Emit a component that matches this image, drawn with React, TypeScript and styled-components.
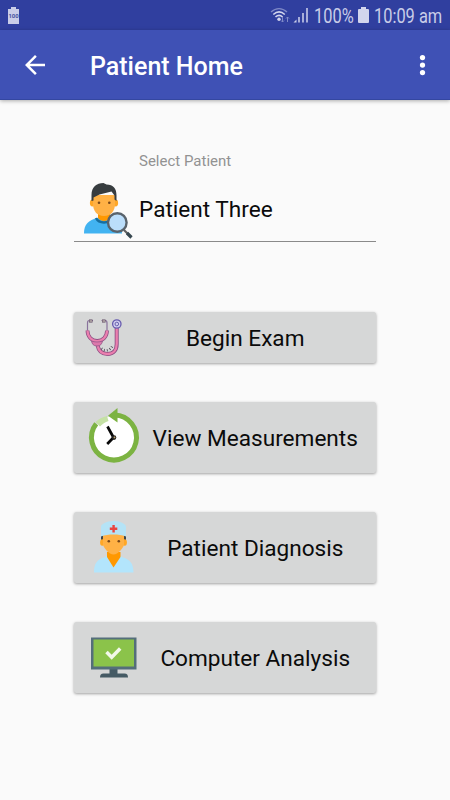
import React from "react";
import styled, { createGlobalStyle } from "styled-components";

const GlobalStyle = createGlobalStyle`
  body { margin: 0; background: #fafafa; }
  * { box-sizing: border-box; }
`;

const Screen = styled.div`
  width: 450px;
  height: 800px;
  overflow: hidden;
  display: flex;
  flex-direction: column;
  background: #fafafa;
  color: #0b0b0b;
  font-family: Roboto, "Liberation Sans", sans-serif;
`;

const StatusBar = styled.div`
  flex: none;
  height: 30px;
  display: flex;
  align-items: center;
  padding: 0 0 0 7px;
  background: #303f9f;
  color: #c9cde8;
`;

const StatusIcons = styled.svg<{ $left?: string; $right?: number }>`
  display: block;
  flex: none;
  margin-left: ${(p) => p.$left ?? "0"};
  margin-right: ${(p) => p.$right ?? 0}px;
`;

const StatusText = styled.div<{ $width: number; $scale: number }>`
  flex: none;
  width: ${(p) => p.$width}px;
  font-size: 20px;
  line-height: 30px;
  white-space: nowrap;
  transform: translateY(0.5px) scaleX(${(p) => p.$scale});
  transform-origin: left center;
`;

const AppBar = styled.header`
  flex: none;
  height: 70px;
  display: flex;
  align-items: center;
  padding: 0 15px 0 20px;
  background: #3f51b5;
  border-bottom: 1px solid #3447a1;
  box-shadow: 0 1px 4px rgba(0, 0, 0, 0.32);
  color: #fff;
`;

const IconButton = styled.button`
  width: 30px;
  height: 30px;
  padding: 0;
  border: 0;
  background: none;
  svg { display: block; }
`;

const Title = styled.h1`
  flex: 1;
  margin: 5px 0 0 40px;
  font-size: 25px;
  line-height: 30px;
  font-weight: 500;
  white-space: nowrap;
`;

const Content = styled.main`
  width: 302.5px;
  margin: 0 0 0 73.5px;
  display: flex;
  flex-direction: column;
`;

const PatientField = styled.div`
  margin-top: 51px;
  height: 91px;
  display: grid;
  grid-template-columns: 65.5px 1fr;
  grid-template-rows: 20px 1fr;
  border-bottom: 1.5px solid #8a8a8a;
`;

const FieldLabel = styled.label`
  grid-column: 2;
  font-size: 15px;
  line-height: 20px;
  color: #929292;
`;

const FieldValue = styled.div`
  grid-column: 2;
  padding-top: 24px;
  font-size: 22.6px;
  line-height: 30px;
`;

const FieldIcon = styled.div`
  grid-column: 1;
  padding: 10px 0 0 8.5px;
  svg { display: block; }
`;

const Actions = styled.nav`
  margin-top: 70px;
  display: flex;
  flex-direction: column;
  gap: 39px;
`;

const ActionButton = styled.button<{ $height: number }>`
  height: ${(p) => p.$height}px;
  display: flex;
  align-items: center;
  padding: 0 7.5px 0 8.5px;
  border: 0;
  border-radius: 2.5px;
  background: #d6d7d7;
  box-shadow: 0 1px 3px rgba(0, 0, 0, 0.36);
  color: inherit;
  font: inherit;
  svg { display: block; flex: none; }
`;

const ActionLabel = styled.span`
  flex: 1;
  padding-top: 2px;
  text-align: center;
  font-size: 22.6px;
  line-height: 30px;
  white-space: nowrap;
`;

const PatientIcon = () => (
  <svg width="53" height="58" viewBox="82 181 53 58">
    <path d="M84 233.500c0-9 4-13.500 14-15.500h11c9 2 13 7 13 15.500z" fill="#42b3f1" />
    <path d="M96 218c3 6 13 6 16 0" fill="none" stroke="#176e9f" strokeWidth="2.500" />
    <path d="M98 208h12v10c-3 4-9 4-12 0z" fill="#ff9800" />
    <ellipse cx="92.300" cy="203" rx="2.400" ry="3.400" fill="#ffa726" />
    <ellipse cx="115.700" cy="203" rx="2.400" ry="3.400" fill="#ffa726" />
    <path d="M93 195h22v9c0 7-4 12-11 12s-11-5-11-12z" fill="#ffb145" />
    <path d="M91.500 201v-6c0-8 5-12 12-12l3 1.500c7 0 10 4 10 11v5.500l-2-1.500v-4l-3-4-12 3-6 3v3z" fill="#373c3f" />
    <circle cx="99" cy="202.700" r="1.300" fill="#784719" />
    <circle cx="109.300" cy="202.700" r="1.300" fill="#784719" />
    <path d="m124 230 7 7" stroke="#616161" strokeWidth="2.200" />
    <path d="m127 233 4.500 4.500" stroke="#37474f" strokeWidth="3.200" />
    <circle cx="117.300" cy="222.500" r="9.300" fill="#bbdefb" stroke="#59636c" strokeWidth="2.400" />
  </svg>
);

const StethoscopeIcon = () => (
  <svg width="40" height="44" viewBox="82 316 40 44" fill="none">
    <path d="M93 320.500h-3.800c-1.700 0-1.700 1-1.700 2.500v8M101.500 320.500h3.800c1.700 0 1.700 1 1.700 2.500v8" stroke="#89729c" strokeWidth="1.200" />
    <path d="M89 321h3.500M102 321h3.500" stroke="#5d4961" strokeWidth="3" />
    <path d="M89.500 321h2.500M102.500 321h2.500" stroke="#ece5d5" strokeWidth="1.200" />
    <path d="M87.500 330.500c0 6 4 10.500 9.700 10.500s9.800-4.500 9.800-10.500" stroke="#8d4e83" strokeWidth="3.800" />
    <path d="M87.500 330.500c0 6 4 10.500 9.700 10.500s9.800-4.500 9.800-10.500" stroke="#eb7fae" strokeWidth="2.200" />
    <path d="M97.500 345c1 6 5 9 10 9 6 0 9.200-4 9.200-10v-16" stroke="#8d4e83" strokeWidth="4" />
    <path d="M97.500 345c1 6 5 9 10 9 6 0 9.200-4 9.200-10v-16" stroke="#eb7fae" strokeWidth="2.300" />
    <path d="M91.500 341c3 1.300 8 1.300 11 0-.5 3-2 5-5.500 5s-5-2-5.500-5z" fill="#dd78ab" stroke="#945a8c" strokeWidth=".8" />
    <path d="M101.500 348.500c3 3 9 2.500 11-3" stroke="#4d4856" strokeWidth="2.500" strokeDasharray=".8 2.100" />
    <circle cx="116.800" cy="324" r="4.200" fill="#d1cef0" stroke="#675bae" strokeWidth="1.300" />
    <circle cx="116.800" cy="324" r="1.800" stroke="#6962ae" strokeWidth="1" />
  </svg>
);

const ClockIcon = () => (
  <svg width="60" height="60" viewBox="82 408 60 60">
    <circle cx="113.800" cy="437.500" r="21.500" fill="#fff" />
    <path d="m95.500 422 4.500 4.500c2.500-2.700 5-4.300 8.500-5.500l-1.500-5c-4.500 1-8.500 3-11.500 6z" fill="#c5e1a5" />
    <path d="M114.500 415a22.500 22.500 0 1 1-18.300 8.700" fill="none" stroke="#7cb342" strokeWidth="5" />
    <path d="m117.500 408-9.500 7.700 9.500 6.800z" fill="#7cb342" />
    <path d="m107.500 426.500 6 11-6.300 6.500" fill="none" stroke="#080808" strokeWidth="2.700" strokeLinejoin="round" />
    <circle cx="114" cy="437.600" r="2.300" fill="#222" />
    <circle cx="114.500" cy="437.400" r=".9" fill="#c0a36b" />
  </svg>
);

const DoctorIcon = () => (
  <svg width="60" height="60" viewBox="82 518 60 60">
    <path d="M94 572.500c0-9 3-13 10-15l5-3h9l5 3c7 2 10.500 6 10.500 15z" fill="#b3e5fc" />
    <path d="M107 552h13.500v5l-7 10.500-6.500-10.500z" fill="#ff9800" />
    <path d="M101 535h25v6.500h-2.500v-4h-20v4H101z" fill="#40474a" />
    <ellipse cx="102.300" cy="542.500" rx="2.200" ry="3.200" fill="#ffa726" />
    <ellipse cx="124.700" cy="542.500" rx="2.200" ry="3.200" fill="#ffa726" />
    <path d="M103 534h21v11c-1 3-6 9.500-10.500 9.500S104 548 103 545z" fill="#ffb145" />
    <path d="M101 536.500v-10c0-2 5-5.500 12.500-5.500s12.500 3.500 12.500 5.500v10c-4-1.500-8-2-12.500-2s-8.500.5-12.500 2z" fill="#b5e3f6" />
    <path d="M113.600 525v7.500M109.800 528.700h7.500" stroke="#e94540" strokeWidth="2.400" />
    <circle cx="108.800" cy="541.200" r="1.300" fill="#784719" />
    <circle cx="118.800" cy="541.200" r="1.300" fill="#784719" />
  </svg>
);

const ComputerIcon = () => (
  <svg width="60" height="60" viewBox="82 628 60 60">
    <path d="M109.500 668h8v6.500h-8z" fill="#455a64" />
    <path d="M100 677.500c0-2.500 1-4 3.500-4h21c2.500 0 3.500 1.500 3.500 4z" fill="#455a64" />
    <path d="M91 637.500h45.500v32H91z" fill="#546e7a" />
    <path d="M93.500 639.500h40.500v27H93.500z" fill="#8bc34a" />
    <path d="m106.500 652 5.200 5.200 8.500-8.700" fill="none" stroke="#f2f8e9" strokeWidth="3.500" />
  </svg>
);

const actions = [
  { label: "Begin Exam", height: 51, icon: <StethoscopeIcon /> },
  { label: "View Measurements", height: 71, icon: <ClockIcon /> },
  { label: "Patient Diagnosis", height: 71, icon: <DoctorIcon /> },
  { label: "Computer Analysis", height: 71, icon: <ComputerIcon /> },
];

export default function App() {
  return (
    <Screen>
      <GlobalStyle />
      <StatusBar>
        <StatusIcons width="13" height="18" viewBox="0 0 13 18">
          <path d="M4 1h5v2h3v15H1V3h3z" fill="#c9cde8" />
          <text x="1.400" y="12" textLength="10.200" lengthAdjust="spacingAndGlyphs" fontSize="6" fontWeight="700" fill="#46539f">100</text>
        </StatusIcons>
        <StatusIcons $left="auto" $right={4} width="40" height="18" viewBox="270 6 40 18">
          <g fill="none" stroke="#a9b0dc" strokeWidth="1.400">
            <path d="M271 12c5-4.500 11-4.500 16 0" opacity=".65" />
            <path d="M273.300 14.500c3.600-3.200 7.900-3.200 11.500 0M275.500 17c2.200-2 4.900-2 7.100 0" stroke="#d2d5ed" strokeWidth="1.600" />
          </g>
          <circle cx="279" cy="19.200" r="1.700" fill="#d2d5ed" />
          <path d="M282.500 17v5m-1.500-1.500 1.500 1.500 1.500-1.500M287.500 22v-5m-1.500 1.500 1.500-1.500 1.500 1.500" fill="none" stroke="#7f89c8" />
          <path d="m293.500 22.500 3-3v3z" fill="#c9cde8" />
          <path d="M299 22.500V17M303 22.500v-9.500M307 22.500V8" fill="none" stroke="#b5bae0" strokeWidth="1.800" />
        </StatusIcons>
        <StatusText $width={44} $scale={0.82}>100%</StatusText>
        <StatusIcons $right={5} width="11" height="18" viewBox="0 0 11 18">
          <path d="M3 1h5v2h2q1 0 1 1v12q0 1-1 1H1q-1 0-1-1V4q0-1 1-1h2z" fill="#d2d5ed" />
        </StatusIcons>
        <StatusText $width={76} $scale={0.82}>10:09 am</StatusText>
      </StatusBar>
      <AppBar>
        <IconButton aria-label="Back">
          <svg width="30" height="30" viewBox="0 0 24 24" fill="#fff"><path d="M20 11H7.830l5.590-5.590L12 4l-8 8 8 8 1.410-1.410L7.830 13H20z" /></svg>
        </IconButton>
        <Title>Patient Home</Title>
        <IconButton aria-label="More options">
          <svg width="30" height="30" viewBox="-2 0 24 24" fill="#fff"><circle cx="12" cy="6" r="2.100" /><circle cx="12" cy="12" r="2.100" /><circle cx="12" cy="18" r="2.100" /></svg>
        </IconButton>
      </AppBar>
      <Content>
        <PatientField>
          <FieldLabel>Select Patient</FieldLabel>
          <FieldIcon><PatientIcon /></FieldIcon>
          <FieldValue>Patient Three</FieldValue>
        </PatientField>
        <Actions>
          {actions.map((a) => (
            <ActionButton key={a.label} $height={a.height}>
              {a.icon}
              <ActionLabel>{a.label}</ActionLabel>
            </ActionButton>
          ))}
        </Actions>
      </Content>
    </Screen>
  );
}
